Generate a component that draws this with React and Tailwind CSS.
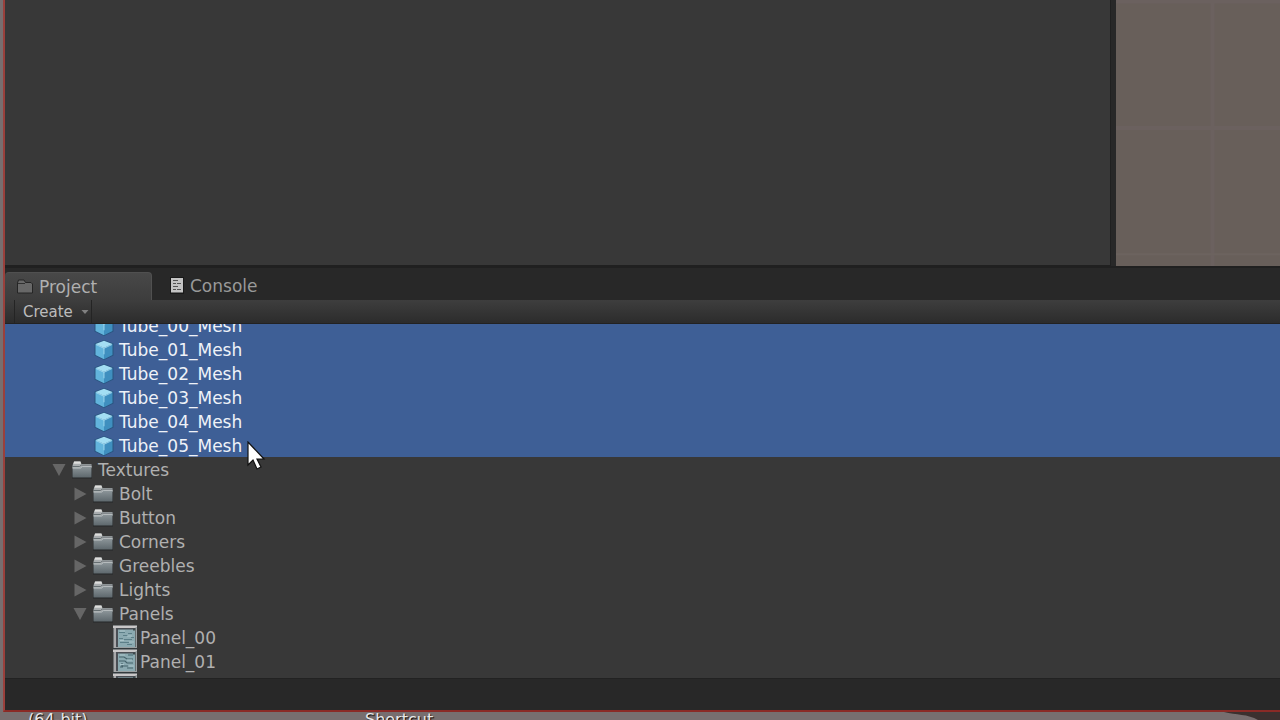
const meshes = ["Tube_00_Mesh", "Tube_01_Mesh", "Tube_02_Mesh", "Tube_03_Mesh", "Tube_04_Mesh", "Tube_05_Mesh"];
const closedFolders = ["Bolt", "Button", "Corners", "Greebles", "Lights"];

function CubeIcon() {
  return (
    <svg className="h-5 w-5 shrink-0" viewBox="0 0 20 20" aria-hidden="true">
      <path d="M10 0 19.500 3.500v12L10 20 0.500 15.500v-12z" fill="#28547f" />
      <path d="M10 0.800 18.500 4 10 8 1.500 4z" fill="#a3def3" />
      <path d="M1.500 4 10 8v11.200L1.500 15z" fill="#62b4dc" />
      <path d="M18.500 4 10 8v11.200l8.500-4.200z" fill="#3f8fbf" />
      <path d="M2 4.500 10 8.300 18 4.500M10 8.300v6" fill="none" stroke="#aee2f5" strokeWidth="0.8" />
    </svg>
  );
}

function FolderIcon() {
  return (
    <svg className="h-5 w-5 shrink-0" viewBox="0 0 20 20" aria-hidden="true">
      <defs>
        <linearGradient id="folderFace" x1="0" y1="0" x2="0" y2="1">
          <stop offset="0" stopColor="#8f989c" />
          <stop offset="1" stopColor="#5e686d" />
        </linearGradient>
      </defs>
      <path d="M0 4h20v14.500H0z" fill="#252728" />
      <path d="M0.500 5 2 1.500h6.500L9.500 4H19.500v4H0.500z" fill="#a9adaf" />
      <path d="M2.200 1.500h6.100l.8 2.200H1.500z" fill="#dededc" />
      <path d="M0.500 7.500h7.500l2-1.500h9.500V17.500h-19z" fill="url(#folderFace)" />
      <path d="M0.500 8h8l2-1.700h9" fill="none" stroke="#c6cbcc" strokeWidth="0.9" />
      <path d="M0.500 6.500h7l1.800-1.400h10.200" fill="none" stroke="#5e666a" strokeWidth="0.9" />
    </svg>
  );
}

function TextureIcon({ variant = 0 }) {
  return (
    <svg className="h-6 w-6 shrink-0" viewBox="0 0 24 24" aria-hidden="true">
      <path d="M0 0h24v24H0z" fill="#333a3d" />
      <path d="M0 0.500h24v2.500H0z" fill="#c9c7c8" />
      <path d="M0.500 3h2.500v20H0.500z" fill="#a9a9ab" />
      <path d="M22.500 2H24v21h-1.500zM3 22h20v1H3z" fill="#9aa0a2" />
      <path d="M5 4h17v18H5z" fill="#8baab1" />
      <path d="M3 3h2v19H3zM5 3h17v1.500H5z" fill="#4b4f55" />
      {variant === 0 ? (
        <path d="M6 7.500h6M10 10.500h5M15 8.500h4M6 13.500h4M11 14.500h8M7 17.500h9M14 19.500h5M18 12.500h3" fill="none" stroke="#5c7f88" />
      ) : (
        <path d="M6 8h5l3 2h6M15 6h5M6 12h6l2 2h6M9 14v3h6M7 18h3M14 19h6" fill="none" stroke="#45626a" strokeWidth="1.200" />
      )}
      <path d="M7 6h5M14 11h5M7 15.500h4M16 17h5" stroke="#a9c4c9" />
      <path d="M20 3.500h2v2h-2z" fill="#3d484c" />
    </svg>
  );
}

function Toggle({ open = false, label }) {
  return (
    <button type="button" aria-label={label} aria-expanded={open} className="flex h-5 w-5 shrink-0 items-center text-[#666666]">
      <svg className="h-3.5 w-3.5" viewBox="0 0 14 14" fill="currentColor" aria-hidden="true">
        {open ? <path d="M0.500 1h13L7 13z" /> : <path d="M1.500 0.500v13l12-6.500z" />}
      </svg>
    </button>
  );
}

function FolderRow({ name, open = false, className }) {
  return (
    <li role="treeitem" aria-expanded={open} className={className}>
      <div className="flex h-6 items-center pt-0.5">
        <Toggle open={open} label={name} />
        <FolderIcon />
        <span className="pl-1.5">{name}</span>
      </div>
    </li>
  );
}

export default function App() {
  return (
    <div className="flex h-screen flex-col overflow-hidden bg-[#776e6f] font-['DejaVu_Sans',sans-serif] text-[17px] leading-6 text-[#b0b0b0]">
      <div className="flex min-h-0 flex-1 flex-col pl-[3px]">
        <div className="flex min-h-0 flex-1 flex-col border-b-2 border-l-2 border-b-[#8a2a26] border-l-[#9a403c] bg-[#282828]">
          <div className="flex min-h-0 flex-[267_1_0px]">
            <section aria-label="Scene" className="flex-1 border-r border-b border-[#202020] bg-[#383838]" />
            <div className="w-[5px] bg-[#282828]" />
            <section aria-label="Viewport" className="w-[13%] max-w-[164px] bg-[#685f5a]">
              <svg className="h-full w-full" viewBox="0 0 164 265" preserveAspectRatio="none" aria-hidden="true">
                <path d="M0 1.500h164M0 127.500h164M96.500 0v265" stroke="#6b615f" strokeWidth="4" />
                <path d="M0 253h164" stroke="#6c635f" strokeWidth="2" />
              </svg>
            </section>
          </div>

          <section aria-label="Project" className="flex min-h-0 flex-[443_1_0px] flex-col border-t-2 border-[#202020]">
            <div role="tablist" className="flex h-8 shrink-0 items-end bg-[#282828]">
              <button type="button" role="tab" aria-selected="true" className="flex h-7 w-[147px] items-center gap-1.5 rounded-t border-t border-r border-[#505050] bg-linear-to-b from-[#484848] to-[#3d3d3d] pl-3">
                <svg className="h-4 w-4" viewBox="0 0 16 16" aria-hidden="true">
                  <path d="M0.500 4 1.500 1h5.500l1.500 2.500H14L15.500 5v9H0.500z" fill="#686868" stroke="#252525" />
                  <path d="M1 4.500h7" stroke="#303030" />
                </svg>
                <span>Project</span>
              </button>
              <button type="button" role="tab" aria-selected="false" className="flex h-7 items-center gap-1.5 pl-[18px] text-[#999999]">
                <svg className="h-[18px] w-3.5" viewBox="0 0 14 18" aria-hidden="true">
                  <path d="M0 0h14v17H0z" fill="#191919" />
                  <path d="M1 1h12v14.500H1z" fill="#c4c4c4" />
                  <path d="M3 3.500h5M3 6.500h3M7 6.500h4M3 9.500h5M3 12.500h3M7 12.500h4" stroke="#555555" />
                </svg>
                <span>Console</span>
              </button>
            </div>
            <div className="flex h-6 shrink-0 border-b border-[#222222] bg-linear-to-b from-[#3e3e3e] to-[#2c2c2c] pl-[9px]">
              <button type="button" className="flex items-center gap-2 border-x border-[#242424] pr-0.5 pl-2 text-[15px] text-[#bcbcbc]">
                Create
                <svg className="h-1.5 w-2" viewBox="0 0 8 6" aria-hidden="true">
                  <path d="M0.500 1h7L4 5z" fill="#808080" />
                </svg>
              </button>
            </div>
            <div className="min-h-0 flex-1 overflow-hidden bg-[#383838]">
              <ul role="tree" aria-label="Assets" className="-mt-[11px]">
                {meshes.map((name) => (
                  <li key={name} role="treeitem" aria-selected="true" className="flex h-6 items-center gap-[5px] bg-[#3e5f96] pt-0.5 pl-[89px] text-[#eef2f8]">
                    <CubeIcon />
                    <span>{name}</span>
                  </li>
                ))}
                <FolderRow name="Textures" open className="pl-[47px]" />
                {closedFolders.map((name) => (
                  <FolderRow key={name} name={name} className="pl-[68px]" />
                ))}
                <FolderRow name="Panels" open className="pl-[68px]" />
                {["Panel_00", "Panel_01", "Panel_02"].map((name, i) => (
                  <li key={name} role="treeitem" aria-label={name} className="flex h-6 items-center gap-[3px] pl-[108px]">
                    <TextureIcon variant={i % 2} />
                    <span className="pt-0.5">{name}</span>
                  </li>
                ))}
              </ul>
            </div>
            <footer className="h-8 shrink-0 border-t border-[#222222] bg-[#282828]" />
          </section>
        </div>
      </div>

      <div className="relative flex h-2 shrink-0 overflow-hidden text-[16px] leading-4 text-[#e8e8e8] text-shadow-[1px_1px_1px_#000000]">
        <span className="w-[365px] pl-7">(64-bit)</span>
        <span>Shortcut</span>
        <svg className="absolute top-0 right-0 h-2 w-14" viewBox="0 0 56 8" aria-hidden="true">
          <path d="M0 0h56v8H34C24 2 12 3 0 0z" fill="#3b302f" />
        </svg>
      </div>

      <svg className="absolute top-[441px] left-[247px] h-8 w-5" viewBox="0 0 20 32" aria-hidden="true">
        <path d="M1 1v23l5-5 4 9 4-2-4-8h7z" fill="#ffffff" stroke="#111111" strokeWidth="1.200" />
      </svg>
    </div>
  );
}
